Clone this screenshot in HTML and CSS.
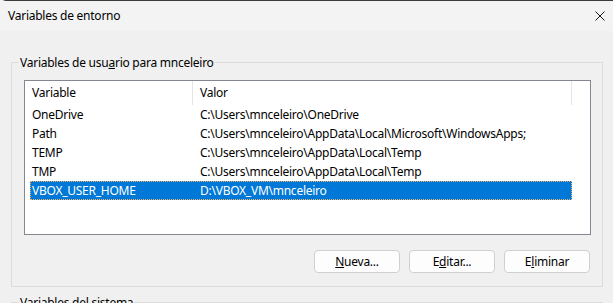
FILE: index.html
```html
<!DOCTYPE html>
<html lang="es">
<head>
  <meta charset="UTF-8">
  <title>Variables de entorno</title>
  <link rel="stylesheet" href="styles.css">
</head>
<body>
  <div class="window">
    <!-- Title bar -->
    <div class="titlebar">
      <span class="title">Variables de entorno</span>
      <svg class="close" width="10" height="10" viewBox="0 0 10 10">
        <path d="M0.5 0.5 L9.5 9.5 M9.5 0.5 L0.5 9.5" stroke="#1a1a1a" stroke-width="1" fill="none"/>
      </svg>
    </div>

    <div class="content">
      <fieldset class="group">
        <legend>Variables de usu<u>a</u>rio para mnceleiro</legend>

        <div class="listview">
          <div class="lv-header">
            <div class="col col-name">Variable</div>
            <div class="col col-value">Valor</div>
            <div class="col col-rest"></div>
          </div>
          <div class="lv-row">
            <div class="cell cell-name">OneDrive</div>
            <div class="cell">C:\Users\mnceleiro\OneDrive</div>
          </div>
          <div class="lv-row">
            <div class="cell cell-name">Path</div>
            <div class="cell">C:\Users\mnceleiro\AppData\Local\Microsoft\WindowsApps;</div>
          </div>
          <div class="lv-row">
            <div class="cell cell-name">TEMP</div>
            <div class="cell">C:\Users\mnceleiro\AppData\Local\Temp</div>
          </div>
          <div class="lv-row">
            <div class="cell cell-name">TMP</div>
            <div class="cell">C:\Users\mnceleiro\AppData\Local\Temp</div>
          </div>
          <div class="lv-row selected">
            <div class="cell cell-name">VBOX_USER_HOME</div>
            <div class="cell">D:\VBOX_VM\mnceleiro</div>
          </div>
        </div>

        <div class="buttons">
          <button class="btn"><u>N</u>ueva...</button>
          <button class="btn">E<u>d</u>itar...</button>
          <button class="btn">E<u>l</u>iminar</button>
        </div>
      </fieldset>

      <fieldset class="group">
        <legend>Variables del sistema</legend>
      </fieldset>
    </div>
  </div>
</body>
</html>
```

FILE: styles.css
```css
html, body {
  margin: 0;
  padding: 0;
  height: 100%;
  overflow: hidden;
}

body {
  font-family: "Noto Sans", "Open Sans", sans-serif;
  font-size: 12px;
  letter-spacing: -0.25px;
  color: #000;
  background: #f0f0f0;
}

.window {
  height: 100%;
  background: #f0f0f0;
  border-top: 1px solid #3a3a3a;
  border-top-left-radius: 6px;
  box-sizing: border-box;
}

.titlebar {
  height: 30px;
  background: #f3f3f3;
  display: flex;
  align-items: center;
  justify-content: space-between;
  padding: 0 8px;
}

.title {
  font-size: 12px;
  line-height: 16px;
}

.close {
  display: block;
}

.content {
  padding-top: 23px;
}

.group {
  margin: 0 10px 0 11px;
  border: 1px solid #dcdcdc;
  padding: 9px 11px 13px 12px;
  min-width: 0;
}

.group + .group {
  margin-top: 7px;
}

.group legend {
  padding: 0 1px;
  margin-left: -5px;
  line-height: 17px;
}

.listview {
  height: 155px;
  box-sizing: border-box;
  border: 1px solid #828790;
  background: #fff;
}

.lv-header {
  display: flex;
  height: 24px;
}

.col {
  line-height: 24px;
  padding-left: 7px;
  box-sizing: border-box;
}

.col-name {
  width: 168px;
  border-right: 1px solid #e5e5e5;
}

.col-value {
  width: 379px;
  border-right: 1px solid #e5e5e5;
}

.col-rest {
  flex: 1;
}

.lv-row {
  display: flex;
  height: 19px;
  line-height: 19px;
  margin-left: 5px;
  width: 542px;
}

.cell {
  white-space: nowrap;
}

.cell-name {
  width: 163px;
  padding-left: 2px;
  box-sizing: border-box;
  margin-right: 7px;
}

.lv-row.selected {
  background: #0078d7;
  color: #fff;
  outline: 1px dotted #f2b46a;
  outline-offset: -1px;
}

.buttons {
  display: flex;
  justify-content: flex-end;
  gap: 9px;
  margin-top: 15px;
  padding-right: 1px;
}

.btn {
  width: 86px;
  height: 23px;
  font-family: inherit;
  font-size: 12px;
  letter-spacing: -0.25px;
  color: #000;
  background: #fdfdfd;
  border: 1px solid #d0d0d0;
  border-radius: 4px;
  padding: 0;
}
```
